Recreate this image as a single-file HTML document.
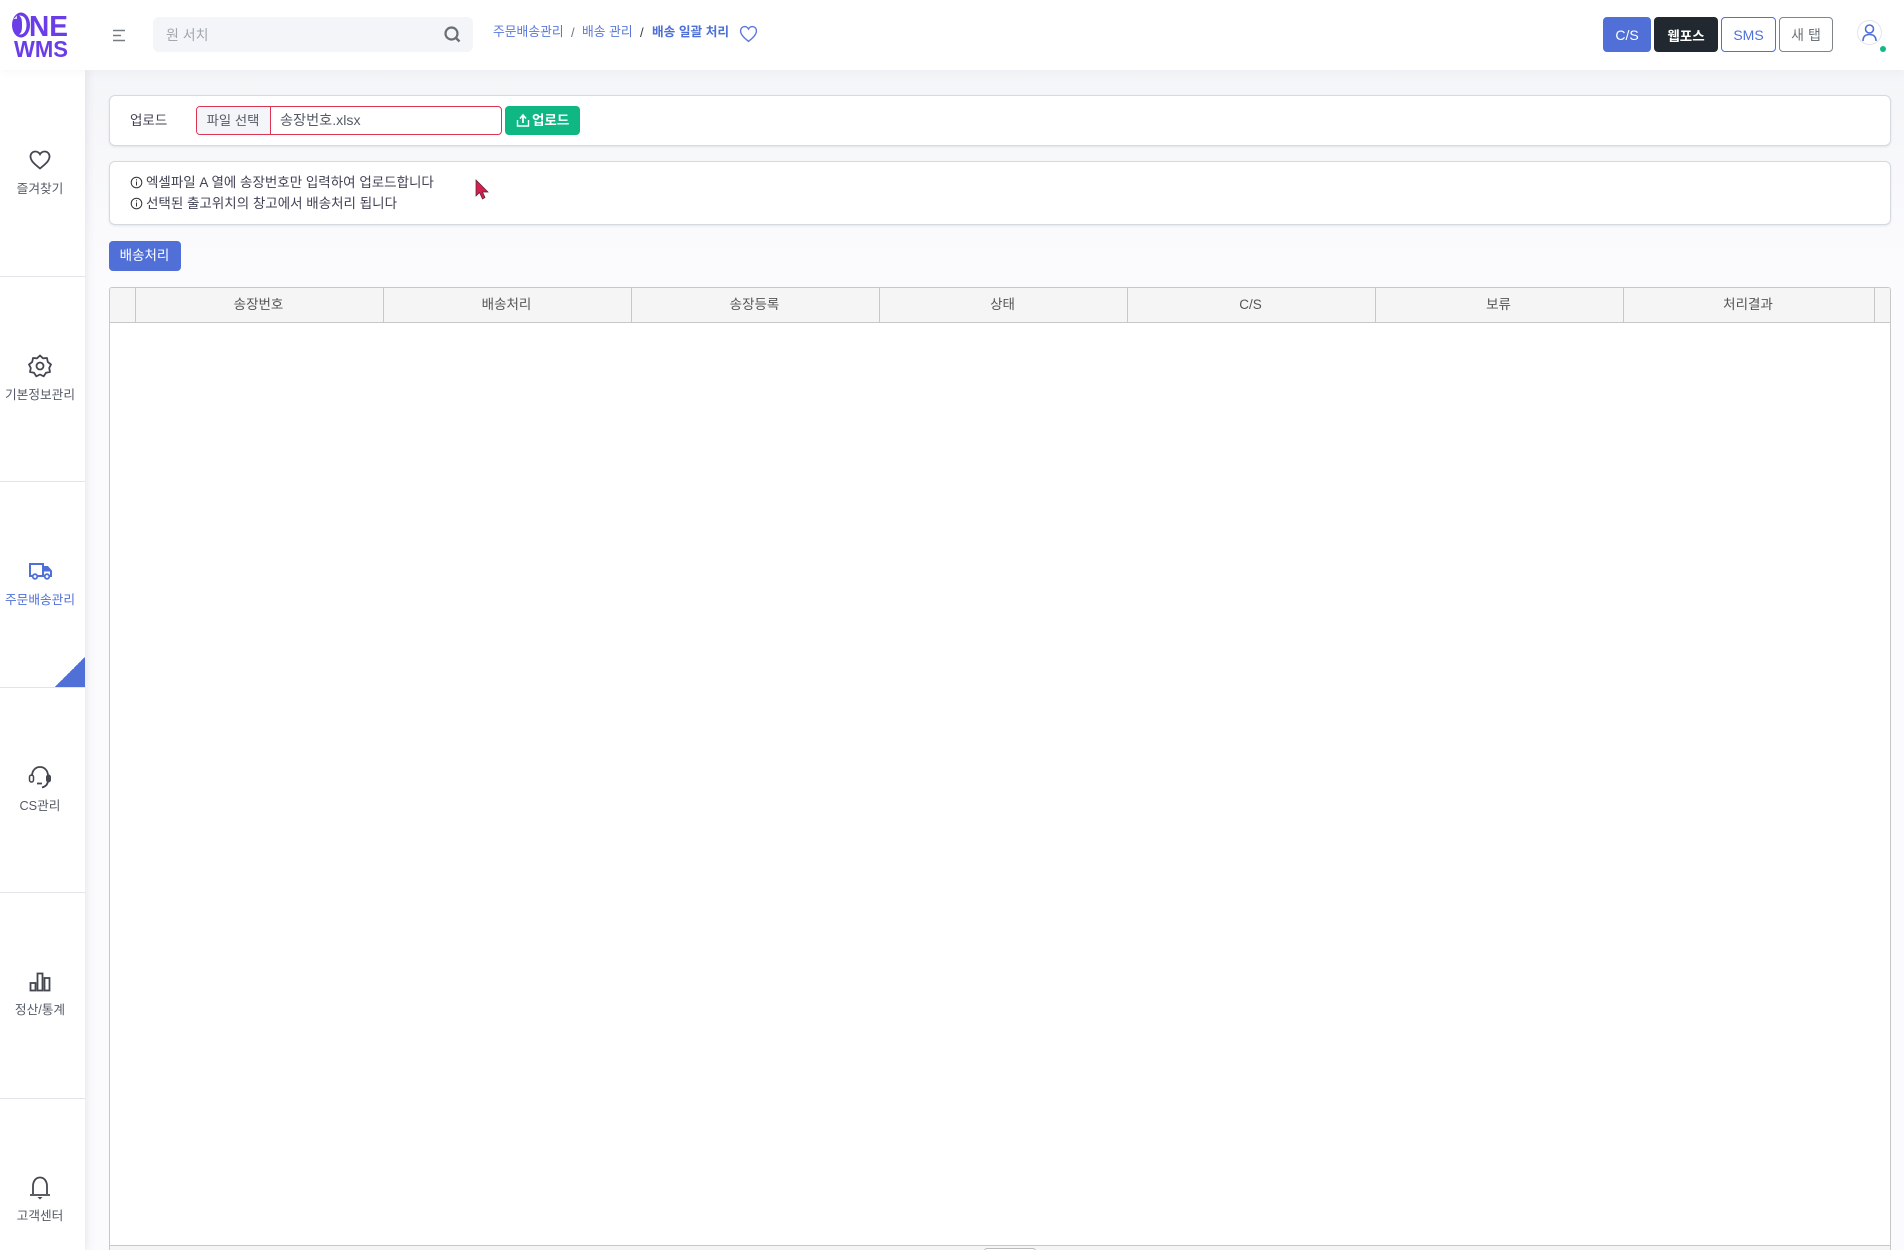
<!DOCTYPE html>
<html lang="ko"><head><meta charset="utf-8"><title>ONE WMS</title>
<style>
*{box-sizing:border-box}
html,body{margin:0;padding:0;width:1904px;height:1250px;overflow:hidden;background:#fbfbfd;font-family:"Liberation Sans","Noto Sans CJK KR",sans-serif;color:#3f4254}
.a{position:absolute}
.t{position:absolute;white-space:nowrap;line-height:1}
#hdr{left:0;top:0;width:1904px;height:70px;background:#fff;box-shadow:0 2px 8px rgba(90,100,130,.05);z-index:3}
#side{left:0;top:70px;width:85px;height:1180px;background:#fff;box-shadow:2px 0 8px rgba(60,70,100,.1);z-index:2}
.div{position:absolute;left:0;width:85px;height:1px;background:#e3e4e8}
.lbl{position:absolute;left:0;width:80px;text-align:center;font-size:12.7px;line-height:16px;color:#555b66;white-space:nowrap}
.card{position:absolute;left:109px;width:1782px;background:#fff;border:1px solid #d5d9e0;border-radius:6px;box-shadow:0 1px 2px rgba(80,90,110,.12)}
.btn{position:absolute;top:17px;height:35px;border-radius:4px;font-size:14px;display:flex;align-items:center;justify-content:center}
.th{position:absolute;top:0;height:34px;border-right:1px solid #c8c8c8;font-size:13.5px;color:#555;text-align:center;line-height:33px;padding-right:2px}
</style></head><body>
<div class="a" style="left:85px;top:70px;width:1819px;height:190px;background:linear-gradient(#f4f5f8,#fbfbfd)"></div>

<div id="hdr" class="a">
 <svg class="a" style="left:11px;top:12px" width="60" height="48" viewBox="0 0 60 48">
  <ellipse cx="10" cy="13" rx="9" ry="12.500" fill="#6a3de8"/>
  <path d="M8 3.500C13.500 3 15.500 8 15.500 13C15.500 18 13.500 23 8 22.500C11 20.500 11 17 11 13C11 9 11 5.500 8 3.500Z" fill="#fff"/>
  <path d="M1.500 8L6 3.500V7H3Z" fill="#fff" opacity=".8"/>
  <text x="18" y="24" font-family="Liberation Sans" font-weight="700" font-size="29" fill="#6a3de8" textLength="39" lengthAdjust="spacingAndGlyphs">NE</text>
  <text x="3" y="45" font-family="Liberation Sans" font-weight="700" font-size="23" fill="#6a3de8" textLength="54" lengthAdjust="spacingAndGlyphs">WMS</text>
 </svg>
 <svg class="a" style="left:112px;top:29px" width="14" height="13" viewBox="0 0 14 13"><path d="M1 1.500H13M1 6.500H9M1 11.500H13" stroke="#767b84" stroke-width="1.500" fill="none"/></svg>
 <div class="a" style="left:153px;top:17px;width:320px;height:35px;background:#f3f5f9;border-radius:6px"></div>
 <div class="t" style="left:166px;top:27.500px;font-size:14px;color:#a3a7ae">원 서치</div>
 <svg class="a" style="left:443px;top:25px" width="18" height="18" viewBox="0 0 18 18"><circle cx="8.500" cy="8.500" r="6" stroke="#6b6f75" stroke-width="2.200" fill="none"/><path d="M13 13L16.500 16.500" stroke="#6b6f75" stroke-width="2.400"/></svg>
 <div class="t" style="left:493px;top:26px;font-size:12.8px;color:#5a78dc">주문배송관리</div>
 <div class="t" style="left:571px;top:26px;font-size:13px;color:#6c757d">/</div>
 <div class="t" style="left:582px;top:26px;font-size:12.8px;color:#5a78dc">배송 관리</div>
 <div class="t" style="left:640px;top:26px;font-size:13px;color:#343a40">/</div>
 <div class="t" style="left:652px;top:26px;font-size:12.7px;font-weight:700;color:#4d6fd8">배송 일괄 처리</div>
 <svg class="a" style="left:739px;top:25px" width="19" height="18" viewBox="0 0 18 17"><path d="M9 15.500C6 13 1.500 9.500 1.500 5.500C1.500 3 3.300 1.500 5.300 1.500C6.800 1.500 8.200 2.300 9 3.800C9.800 2.300 11.200 1.500 12.700 1.500C14.700 1.500 16.500 3 16.500 5.500C16.500 9.500 12 13 9 15.500Z" stroke="#5a78dc" stroke-width="1.300" fill="none"/></svg>

 <div class="btn" style="left:1603px;width:48px;background:#5070d8;color:#fff;border:1px solid #5070d8">C/S</div>
 <div class="btn" style="left:1654px;width:64px;background:#212830;color:#fff;font-weight:700;font-size:13.500px">웹포스</div>
 <div class="btn" style="left:1721px;width:55px;background:#fff;color:#5070d8;border:1px solid #5070d8">SMS</div>
 <div class="btn" style="left:1779px;width:54px;background:#fff;color:#6c757d;border:1px solid #80858c">새 탭</div>
 <svg class="a" style="left:1856px;top:19px" width="27" height="27" viewBox="0 0 27 27"><circle cx="13.500" cy="13.500" r="12" fill="#fff" stroke="#e3e5ea"/><circle cx="13.500" cy="10" r="4" stroke="#5070d8" stroke-width="1.600" fill="none"/><path d="M7 22C7 17.500 9.500 15.500 13.500 15.500C17.500 15.500 20 17.500 20 22" stroke="#5070d8" stroke-width="1.600" fill="none"/></svg>
 <div class="a" style="left:1880px;top:46px;width:6px;height:6px;border-radius:50%;background:#12b886"></div>
</div>

<div id="side" class="a">
 <div class="div" style="top:206px"></div>
 <div class="div" style="top:411px"></div>
 <div class="div" style="top:617px"></div>
 <div class="div" style="top:822px"></div>
 <div class="div" style="top:1028px"></div>

 <svg class="a" style="left:29px;top:80px" width="22" height="20" viewBox="0 0 22 20"><path d="M11 18.500C7.500 15.500 1.500 11.500 1.500 6.500C1.500 3.500 3.800 1.500 6.300 1.500C8.200 1.500 10 2.500 11 4.300C12 2.500 13.800 1.500 15.700 1.500C18.200 1.500 20.500 3.500 20.500 6.500C20.500 11.500 14.500 15.500 11 18.500Z" stroke="#444750" stroke-width="1.800" fill="none"/></svg>
 <div class="lbl" style="top:111px">즐겨찾기</div>

 <svg class="a" style="left:28px;top:284px" width="24" height="24" viewBox="0 0 24 24"><path d="M12 1.500L15 4.300L19 4L19.800 8L23 10.500L21.200 14L22 18L18 18.800L15.700 22.300L12 20.500L8.300 22.300L6 18.800L2 18L2.800 14L1 10.500L4.200 8L5 4L9 4.300Z" stroke="#444750" stroke-width="1.800" fill="none" stroke-linejoin="round"/><circle cx="12" cy="12" r="3.500" stroke="#444750" stroke-width="1.800" fill="none"/></svg>
 <div class="lbl" style="top:317px">기본정보관리</div>

 <svg class="a" style="left:28px;top:492px" width="24" height="18" viewBox="0 0 24 18"><path d="M5 14H2V2H15V14H9" stroke="#4f70d8" stroke-width="2" fill="none"/><path d="M15 5H19.500L23 9V14H21" stroke="#4f70d8" stroke-width="2" fill="none"/><path d="M15 5H19.500L23 9.500H15Z" fill="#4f70d8"/><path d="M15 14H17" stroke="#4f70d8" stroke-width="2"/><circle cx="7" cy="14.500" r="2.300" stroke="#4f70d8" stroke-width="1.800" fill="none"/><circle cx="19" cy="14.500" r="2.300" stroke="#4f70d8" stroke-width="1.800" fill="none"/></svg>
 <div class="lbl" style="top:522px;color:#5070d8">주문배송관리</div>
 <div class="a" style="left:55px;top:587px;width:30px;height:30px;background:linear-gradient(135deg,transparent 50%,#5070d8 50%)"></div>

 <svg class="a" style="left:28px;top:695px" width="24" height="24" viewBox="0 0 24 24"><path d="M4 11C4 5.500 7.500 2 12 2C16.500 2 20 5.500 20 11" stroke="#444750" stroke-width="1.800" fill="none"/><path d="M20 15C20 19 18 21.500 14 22.500" stroke="#444750" stroke-width="1.800" fill="none"/><rect x="1.500" y="10" width="4" height="7" rx="2" stroke="#444750" stroke-width="1.500" fill="none"/><rect x="18.500" y="10" width="4" height="7" rx="2" stroke="#444750" fill="#444750"/><path d="M9 18.500H14" stroke="#444750" stroke-width="1.800"/></svg>
 <div class="lbl" style="top:728px">CS관리</div>

 <svg class="a" style="left:29px;top:902px" width="22" height="20" viewBox="0 0 22 20"><rect x="1.500" y="11" width="5" height="7.500" stroke="#444750" stroke-width="1.800" fill="none"/><rect x="8.500" y="1.500" width="5" height="17" stroke="#444750" stroke-width="1.800" fill="none"/><rect x="15.500" y="6" width="5" height="12.500" stroke="#444750" stroke-width="1.800" fill="none"/></svg>
 <div class="lbl" style="top:932px">정산/통계</div>

 <svg class="a" style="left:29px;top:1106px" width="22" height="24" viewBox="0 0 22 24"><path d="M4 18V10C4 5 7 1.500 11 1.500C15 1.500 18 5 18 10V18" stroke="#444750" stroke-width="1.800" fill="none"/><path d="M1 19H21" stroke="#444750" stroke-width="1.800"/><path d="M8.500 21H13.500L11 23.500Z" fill="#444750"/></svg>
 <div class="lbl" style="top:1138px">고객센터</div>
</div>

<div class="card" style="top:95px;height:51px"></div>
<div class="t" style="left:130px;top:113.500px;font-size:13.500px;color:#3f4254">업로드</div>
<div class="a" style="left:196px;top:106px;width:306px;height:29px;background:#fff;border:1px solid #dc3554;border-radius:4px;overflow:hidden">
 <div class="a" style="left:0;top:0;width:74px;height:27px;background:#f3f5f9;border-right:1px solid #dc3554;font-size:13.300px;color:#555b66;text-align:center;line-height:27px;padding-right:1px">파일 선택</div>
 <div class="t" style="left:83px;top:6.500px;font-size:14.200px;color:#555b66">송장번호.xlsx</div>
</div>
<div class="a" style="left:505px;top:106px;width:75px;height:29px;background:#0fb783;border-radius:4px"></div>
<svg class="a" style="left:516px;top:113px" width="14" height="15" viewBox="0 0 14 15"><path d="M1.500 7V13H12.500V7" stroke="#fff" stroke-width="1.400" fill="none"/><path d="M7 10V2.500M4 5.500L7 2L10 5.500" stroke="#fff" stroke-width="1.700" fill="none"/></svg>
<div class="t" style="left:532px;top:113.500px;font-size:13.500px;color:#fff;font-weight:700">업로드</div>

<div class="card" style="top:161px;height:64px"></div>
<svg class="a" style="left:130px;top:176px" width="13" height="13" viewBox="0 0 13 13"><circle cx="6.500" cy="6.500" r="5.300" stroke="#333" fill="none"/><path d="M6.500 5.500V9.500M6.500 3.200V4.400" stroke="#333"/></svg>
<div class="t" style="left:146px;top:175.500px;font-size:13.500px;color:#3f4254">엑셀파일 A 열에 송장번호만 입력하여 업로드합니다</div>
<svg class="a" style="left:130px;top:197px" width="13" height="13" viewBox="0 0 13 13"><circle cx="6.500" cy="6.500" r="5.300" stroke="#333" fill="none"/><path d="M6.500 5.500V9.500M6.500 3.200V4.400" stroke="#333"/></svg>
<div class="t" style="left:146px;top:196.500px;font-size:13.500px;color:#3f4254">선택된 출고위치의 창고에서 배송처리 됩니다</div>
<svg class="a" style="left:475px;top:179px" width="14" height="21" viewBox="0 0 14 21"><path d="M1 1V17L4.500 13.500L7.500 20L10 18.500L7.500 13H13Z" fill="#d4204f" stroke="#50202f" stroke-width=".7"/></svg>

<div class="a" style="left:109px;top:241px;width:72px;height:30px;background:#5070d8;border-radius:4px;color:#fff;font-size:13.500px;text-align:center;line-height:30px;padding-right:1px">배송처리</div>

<div class="a" style="left:109px;top:287px;width:1782px;height:963px;background:#fff;border:1px solid #c8c8c8;border-bottom:0;border-radius:3px 3px 0 0;overflow:hidden">
 <div class="a" style="left:0;top:0;width:1780px;height:35px;background:#f5f5f5;border-bottom:1px solid #c8c8c8">
  <div class="th" style="left:0;width:26px"></div>
  <div class="th" style="left:26px;width:248px">송장번호</div>
  <div class="th" style="left:274px;width:248px">배송처리</div>
  <div class="th" style="left:522px;width:248px">송장등록</div>
  <div class="th" style="left:770px;width:248px">상태</div>
  <div class="th" style="left:1018px;width:248px">C/S</div>
  <div class="th" style="left:1266px;width:248px">보류</div>
  <div class="th" style="left:1514px;width:251px">처리결과</div>
 </div>
 <div class="a" style="left:0;top:957px;width:1780px;height:6px;background:#f5f5f5;border-top:1px solid #c8c8c8"></div>
 <div class="a" style="left:874px;top:960px;width:52px;height:6px;background:#fff;border:1px solid #bbb;border-radius:3px"></div>
</div>
</body></html>
